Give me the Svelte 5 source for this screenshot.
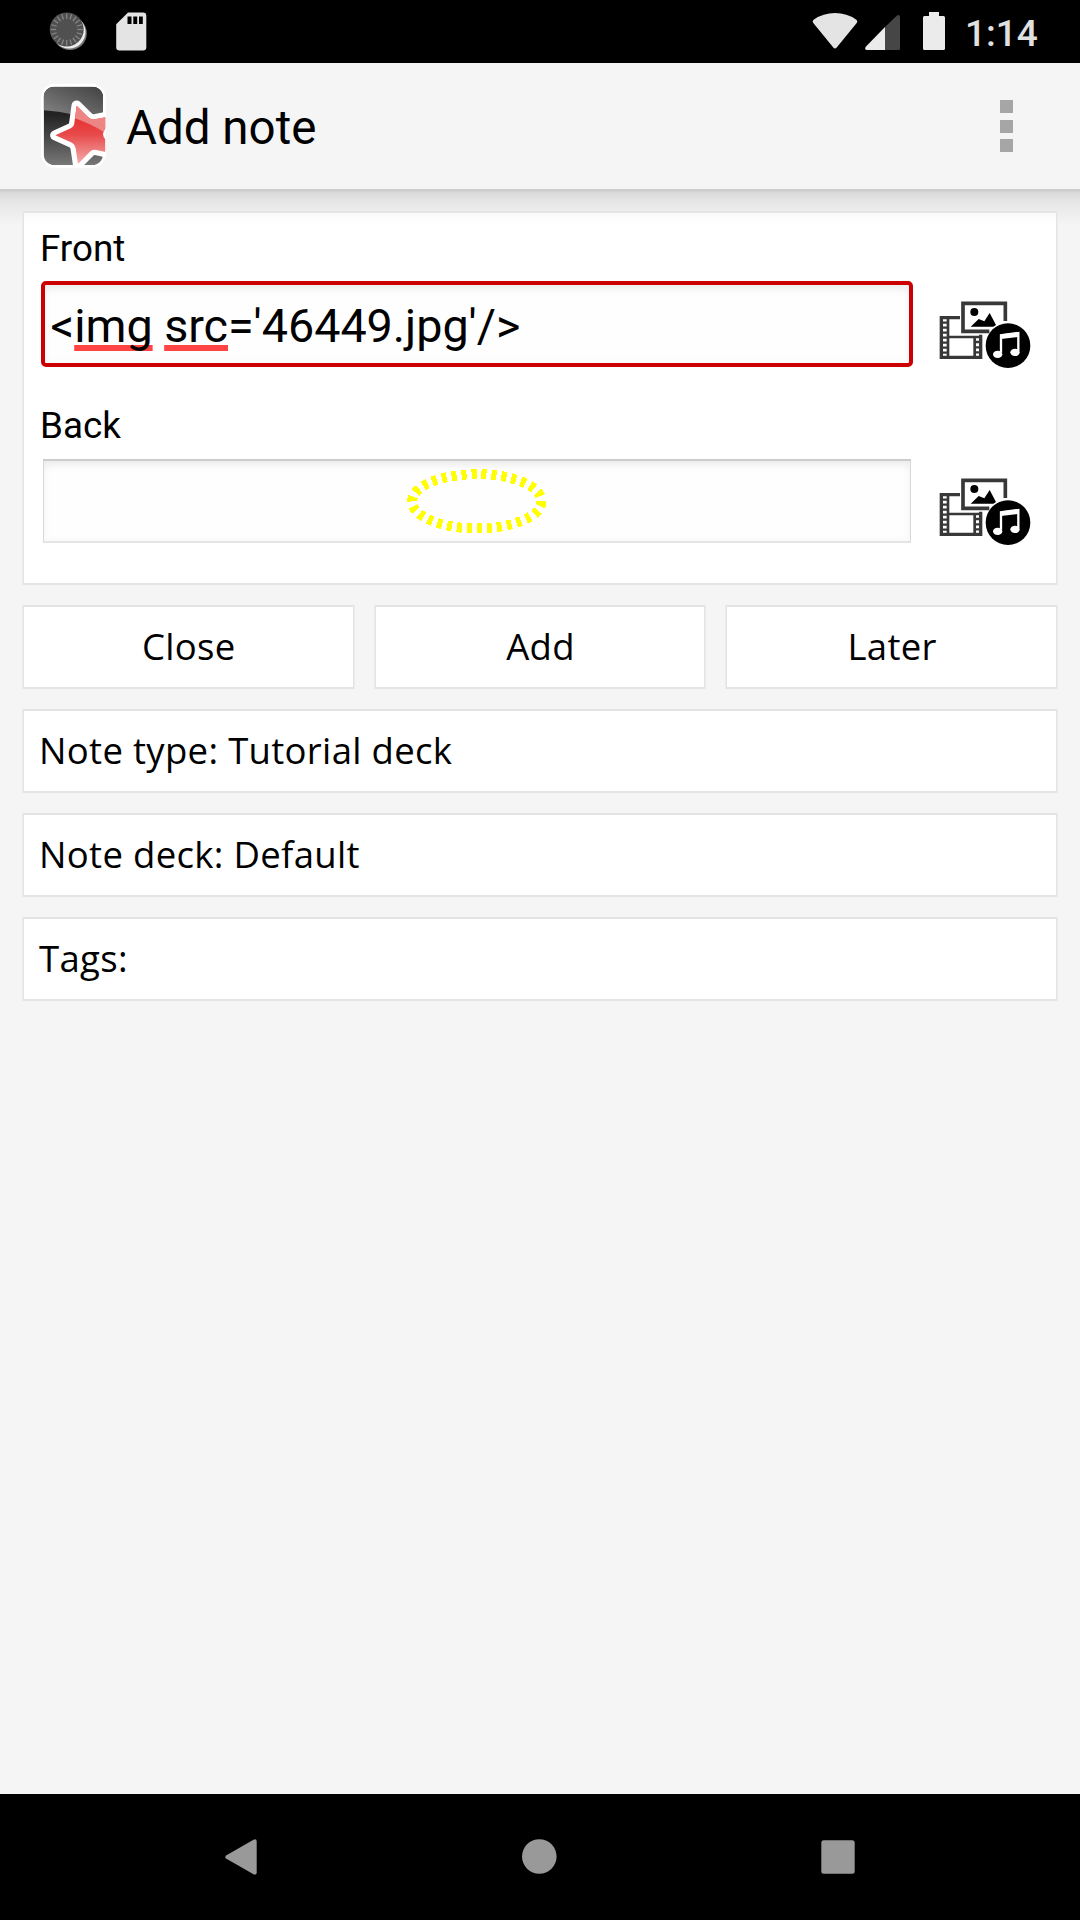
<script>
  const ticks = Array.from({ length: 20 }, (_, i) => i * 18);
  const fields = [
    { label: 'Front', focused: true },
    { label: 'Back', focused: false },
  ];
  const actions = ['Close', 'Add', 'Later'];
  const rows = ['Note type: Tutorial deck', 'Note deck: Default', 'Tags:'];
</script>

<div class="screen">
  <div class="status">
    <svg class="left" width="120" height="63" viewBox="40 0 120 63">
      <circle cx="70" cy="33.3" r="16.8" fill="#777" />
      <circle cx="69" cy="32" r="16.5" fill="#eee" />
      <circle cx="66.7" cy="29.5" r="17" fill="#505050" />
      {#each ticks as a}
        <path d="M66.7 13.5v5.5" stroke="#858585" stroke-width="1.3" transform="rotate({a} 66.7 29.5)" />
      {/each}
      <path d="M128 12.5h15q3.300 0 3.300 3.300v31.400q0 3.300-3.300 3.300h-23.500q-3.300 0-3.300-3.300v-23z" fill="#e4e4e4" />
      <path d="M127.500 16.500h4v7.500h-4zM133.300 16.500h3.900v7.500h-3.900zM139 16.500h3.800v7.500h-3.800z" fill="#000" />
    </svg>
    <div class="right">
      <svg width="140" height="63" viewBox="810 0 140 63">
        <path d="M813.300 23Q811.800 21 814 19.500Q823 13 835 13T856 19.500Q858.200 21 856.700 23L836.700 47.500Q835 49.500 833.300 47.500Z" fill="#e4e4e4" />
        <path d="M885 27L897 15.500Q900 14 900 17V48.500Q900 50 898.500 50H885Z" fill="#464646" />
        <path d="M885 27V50H866.500Q864 49 866 46.500Z" fill="#ebebeb" />
        <path d="M929 12h10v4h4.500q1.500 0 1.500 1.500v31q0 1.500-1.500 1.500h-19q-1.500 0-1.500-1.500v-31q0-1.500 1.500-1.500h4.500z" fill="#ebebeb" />
      </svg>
      <span class="time">1:14</span>
    </div>
  </div>

  <header>
    <svg class="logo" width="70" height="87" viewBox="120 250 210 261">
      <defs>
        <linearGradient id="plate" x1="0" y1="0" x2="0" y2="1">
          <stop offset="0" stop-color="#1c1c1c" />
          <stop offset=".35" stop-color="#222" />
          <stop offset="1" stop-color="#777" />
        </linearGradient>
        <linearGradient id="gloss" x1=".8" y1="0" x2="0.1" y2="1">
          <stop offset="0" stop-color="#484848" />
          <stop offset="1" stop-color="#8c8c8c" />
        </linearGradient>
        <linearGradient id="red" x1="0" y1="0" x2="0" y2="1">
          <stop offset=".25" stop-color="#e63434" />
          <stop offset=".5" stop-color="#e84a4a" />
          <stop offset="1" stop-color="#f5b5b5" />
        </linearGradient>
        <clipPath id="plateClip"><rect x="131" y="261" width="178" height="235" rx="32" /></clipPath>
        <clipPath id="iconClip"><path d="M120 250H317V470Q310 504 280 504H120Z" /></clipPath>
        <clipPath id="starClip"><path d="M230 318L264 352Q272 361 284 359L317 353V386Q301 404 317 420V457L288 451Q277 449 269 457L234 493L227 446Q225 434 216 429L166 407L212 386Q222 381 223 370Z" /></clipPath>
      </defs>
      <rect x="123" y="252" width="194" height="252" rx="41" fill="#fff" />
      <g clip-path="url(#plateClip)">
        <rect x="131" y="261" width="178" height="235" fill="url(#plate)" />
        <path d="M131 261H309V376Q220 336 131 332Z" fill="url(#gloss)" />
      </g>
      <g clip-path="url(#iconClip)">
        <path d="M230 318L264 352Q272 361 284 359L330 350L313 405L330 460L288 451Q277 449 269 457L234 493L227 446Q225 434 216 429L166 407L212 386Q222 381 223 370Z" fill="#fff" stroke="#fff" stroke-width="31" stroke-linejoin="round" />
        <g clip-path="url(#starClip)">
          <rect x="160" y="310" width="160" height="190" fill="url(#red)" />
          <path d="M220 310H320V402Q270 370 215 353Z" fill="#ee8585" />
        </g>
      </g>
    </svg>
    <h1>Add note</h1>
    <div class="overflow"><i></i><i></i><i></i></div>
  </header>

  <main>
    <section class="card">
      {#each fields as f}
        <div class="group">
          <label for={f.label}>{f.label}</label>
          <div class="line">
            <div class="field" class:focused={f.focused} id={f.label}>
              {#if f.focused}
                <span class="value">&lt;<u>img</u> <u>src</u>='46449.jpg'/&gt;</span>
              {:else}
                <svg class="ring" width="142" height="68" viewBox="406 467 142 68" shape-rendering="crispEdges">
                  <ellipse cx="476.800" cy="501.300" rx="64.700" ry="27.200" fill="none" stroke="#ff0" stroke-width="10" stroke-dasharray="5 5" />
                </svg>
              {/if}
            </div>
            <svg class="media" width="94" height="70" viewBox="177 90 282 210">
              <g fill="none" stroke="#383838" stroke-width="10">
                <path d="M240 143H184V262H302V194" />
                <path d="M204 143V262M204 201H302M284 201V262" stroke-width="8" />
                <path d="M184 158h20M184 173h20M184 188h20M184 203h20M184 218h20M184 233h20M184 248h20M284 216h20M284 232h20M284 247h20" stroke-width="7" />
                <path d="M376 153V100H249V184H328" stroke-width="11" />
              </g>
              <circle cx="283" cy="126" r="12" />
              <path d="M272 170L296 147L313 154L329 129L348 165L340 170Z" />
              <circle cx="384" cy="227" r="67" />
              <path d="M363 248V196L415 189V244" fill="none" stroke="#fff" stroke-width="7" />
              <path d="M363 193L416 187V201L363 207Z" fill="#fff" />
              <ellipse cx="353" cy="253" rx="14" ry="11" fill="#fff" />
              <ellipse cx="405" cy="247" rx="14" ry="11" fill="#fff" />
            </svg>
          </div>
        </div>
      {/each}
    </section>

    <div class="actions">
      {#each actions as a}<button class="box">{a}</button>{/each}
    </div>
    {#each rows as r}<div class="box row">{r}</div>{/each}
  </main>

  <nav>
    <svg width="1080" height="126" viewBox="0 1794 1080 126" fill="#999">
      <path d="M226 1855.500L253.500 1839.700Q256.700 1838.500 256.700 1841.500V1872.500Q256.700 1875.500 253.500 1874.300L226 1858.500Q224.500 1857 226 1855.500Z" />
      <circle cx="539.300" cy="1856.500" r="17.300" />
      <rect x="821.300" y="1840.300" width="33.400" height="33.400" rx="2.500" />
    </svg>
  </nav>
</div>

<style>
  :global(body) { margin: 0; }
  .screen {
    width: 1080px;
    height: 1920px;
    display: flex;
    flex-direction: column;
    background: #f5f5f5;
    color: #000;
    font-family: Roboto, sans-serif;
    overflow: hidden;
  }
  .status {
    height: 63px;
    flex: none;
    background: #000;
    display: flex;
    justify-content: space-between;
    padding: 0 42px 0 40px;
  }
  .status svg { display: block; }
  .right { display: flex; }
  .time {
    width: 73px;
    margin-left: 15px;
    font-size: 37px;
    line-height: 67px;
    font-weight: 500;
    color: #e0e0e0;
    white-space: nowrap;
  }
  header {
    height: 126px;
    flex: none;
    display: flex;
    align-items: center;
    padding: 0 67px 0 40px;
  }
  .logo { display: block; margin-top: 1px; }
  h1 {
    margin: 4px 0 0 16px;
    font-size: 47.5px;
    font-weight: 400;
    line-height: 60px;
    flex: 1;
  }
  .overflow { display: grid; gap: 6.5px; }
  .overflow i { width: 13px; height: 13px; background: #a6a6a6; }
  main {
    flex: 1;
    display: flex;
    flex-direction: column;
    gap: 20px;
    padding: 22px 23px 0;
    background: linear-gradient(#cdcdcd, #cdcdcd 2px, #d9d9d9 3px, #e5e5e5 12px, #ebebeb 20px, #f5f5f5 36px);
  }
  .card, .box {
    box-sizing: border-box;
    border: solid #e4e4e4;
    border-width: 2px 1px;
    background: #fff;
    box-shadow: 1px 0 #ebebeb, -1px 0 #ebebeb;
  }
  .card {
    height: 374px;
    padding: 12px 0 0 19px;
    background: linear-gradient(#fafafa, #fff 12px);
  }
  .group { height: 177px; }
  label {
    display: block;
    height: 57px;
    font-size: 36.8px;
    line-height: 48px;
    margin-left: -3px;
  }
  .line { display: flex; align-items: flex-start; }
  .field {
    box-sizing: border-box;
    width: 868px;
    height: 84px;
    border: solid #d8d8d8;
    border-width: 2px 1px;
    border-top-color: #ccc;
    border-bottom-color: #e5e5e5;
    background: #fefefe;
    box-shadow: inset 0 8px 10px -5px #e9e9e9, inset 0 0 8px #f6f6f6;
    padding-left: 362px;
  }
  .field.focused {
    border: 4px solid #c00;
    border-radius: 5px;
    padding-left: 5.5px;
    width: 872px;
    height: 86px;
    margin: -1px -2px;
  }
  .ring { display: block; margin-top: 6px; }
  .value {
    display: block;
    font-size: 46.7px;
    letter-spacing: -.03px;
    line-height: 82px;
    white-space: nowrap;
  }
  u {
    text-decoration: underline 6px #f44;
    text-underline-offset: 3px;
    text-decoration-skip-ink: none;
  }
  .media { display: block; margin: 18px 0 0 28px; }
  .actions { display: grid; grid-template-columns: repeat(3, 1fr); gap: 21px; }
  .box {
    height: 84px;
    font: 36.5px/79px "Open Sans", sans-serif;
    letter-spacing: .32px;
    color: #000;
    padding: 0;
  }
  .actions .box { padding: 0 0 2px 1px; }
  .row { padding-left: 15px; }
  nav { height: 126px; flex: none; background: #000; }
  nav svg { display: block; }
</style>
